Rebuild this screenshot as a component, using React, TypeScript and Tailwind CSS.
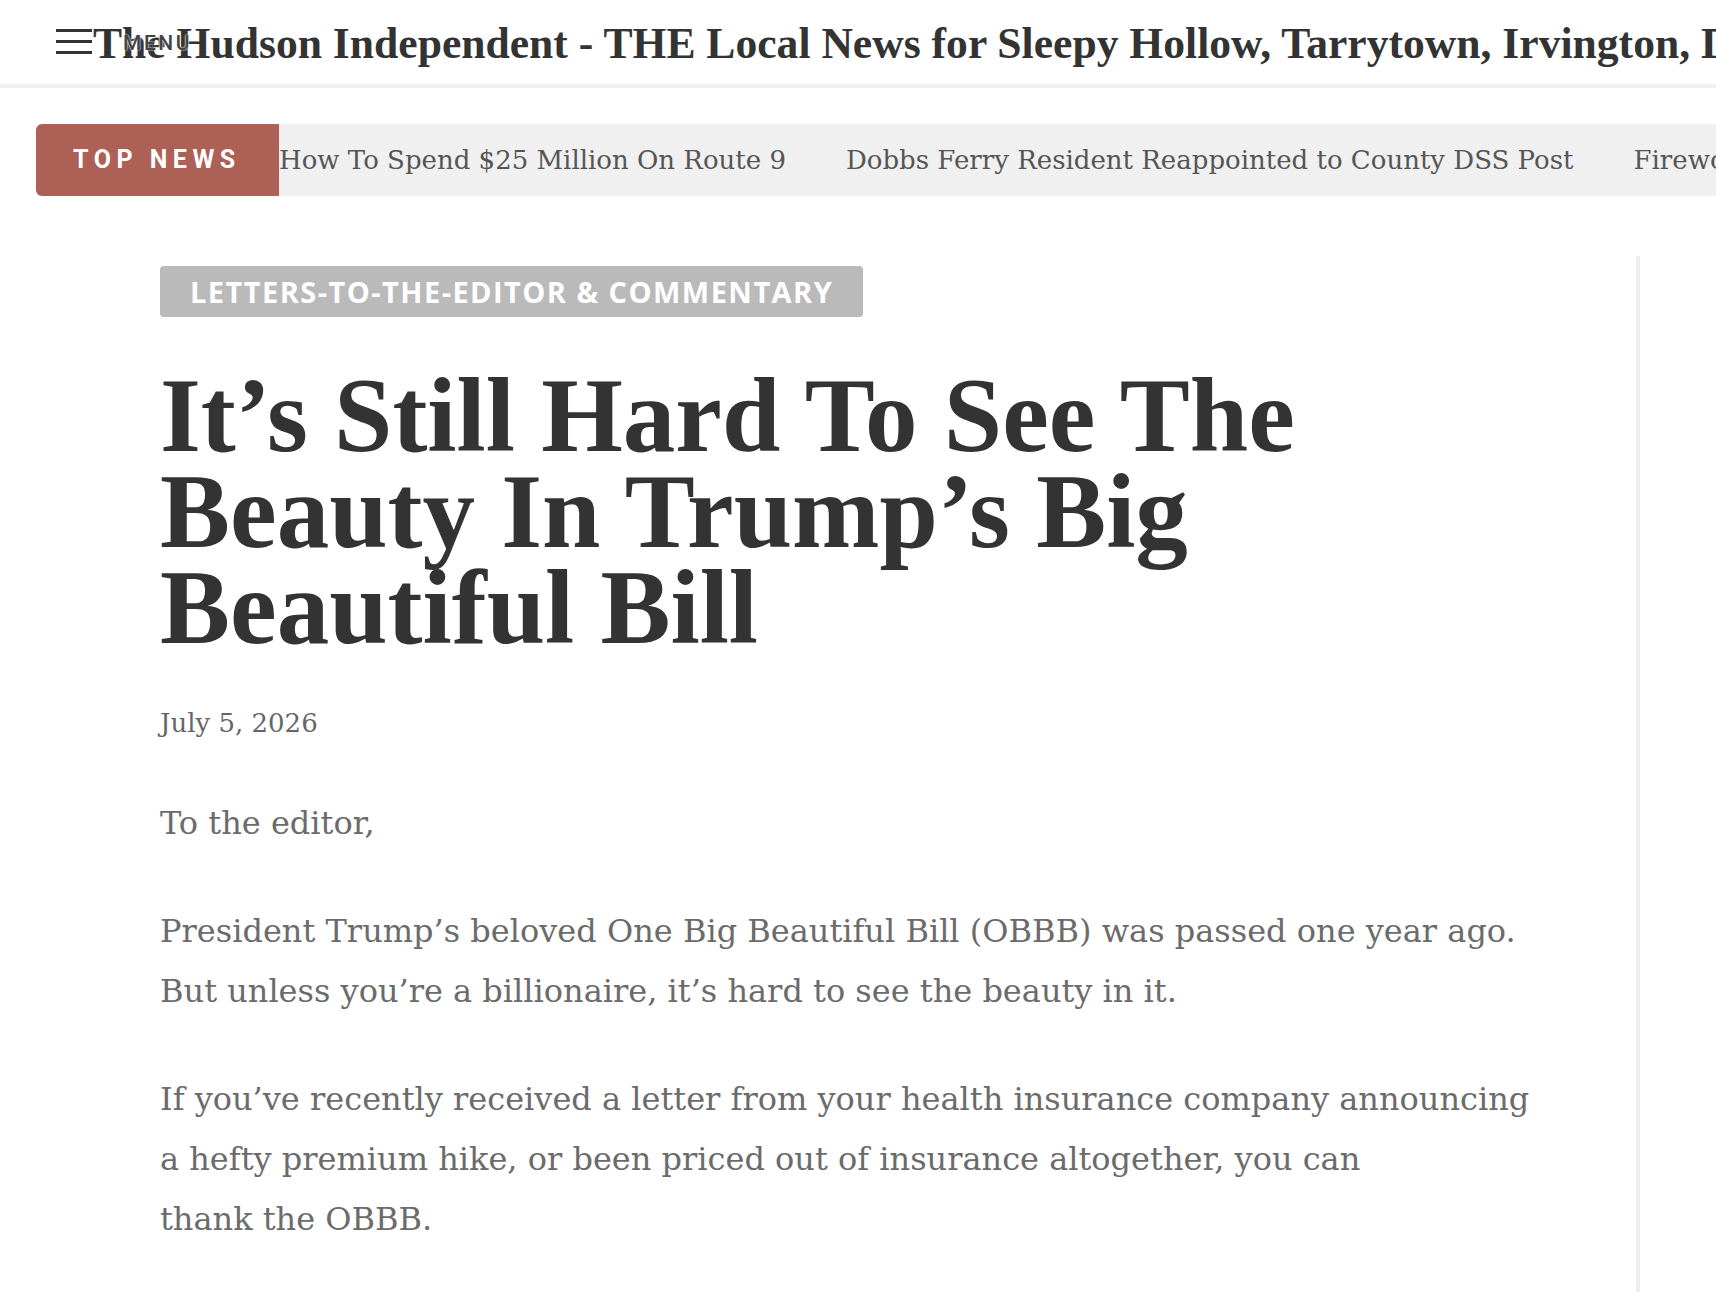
const tickerItems = [
  "How To Spend $25 Million On Route 9",
  "Dobbs Ferry Resident Reappointed to County DSS Post",
  "Fireworks Return To The Riverfront This Weekend",
];

export default function App() {
  return (
    <div className="min-h-screen bg-white overflow-hidden">
      {/* site header */}
      <header className="relative h-[88px] border-b-4 border-[#f0f0f0] flex items-center pl-[93px] pt-[4px] overflow-hidden whitespace-nowrap">
        <span className="font-['Liberation_Serif','Times_New_Roman',serif] font-bold text-[43.6px] text-[#333]">
          The Hudson Independent - THE Local News for Sleepy Hollow, Tarrytown, Irvington, Dobbs Ferry
        </span>
        {/* menu toggle sits on top of the site title */}
        <button className="absolute z-10 left-[56px] top-[29px] flex items-center text-[#333]">
          <span className="flex flex-col gap-[8px]">
            <span className="block w-[36px] h-[3px] bg-[#333]" />
            <span className="block w-[36px] h-[3px] bg-[#333]" />
            <span className="block w-[36px] h-[3px] bg-[#333]" />
          </span>
          <span className="ml-[31px] mt-[4px] font-['Roboto',sans-serif] font-medium text-[21px] leading-none tracking-[0.12em] text-[#444] [text-shadow:0_0_2px_#fff,0_0_1px_#fff]">
            MENU
          </span>
        </button>
      </header>

      {/* top news ticker */}
      <div className="mt-[36px] pl-[36px] flex h-[72px]">
        <div className="w-[243px] shrink-0 rounded-l-[6px] bg-[#ad6055] flex items-center pl-[37px]">
          <span className="font-['Roboto',sans-serif] font-bold text-[25px] tracking-[0.22em] text-white">
            TOP NEWS
          </span>
        </div>
        <div className="flex-1 bg-[#f0f0f0] flex items-center gap-[60px] overflow-hidden whitespace-nowrap">
          {tickerItems.map((item) => (
            <a
              key={item}
              className="font-['DejaVu_Serif',serif] text-[26px] text-[#555]"
            >
              {item}
            </a>
          ))}
        </div>
      </div>

      <main className="flex mt-[60px]">
        <article className="w-[1636px] shrink-0 pl-[160px] pr-[60px] pt-[10px] pb-[120px]">
          <span className="inline-block rounded-[4px] bg-[#bababa] px-[30px] h-[51px] leading-[51px] font-['Open_Sans',sans-serif] font-bold text-[29px] tracking-[0.05em] text-white">
            LETTERS-TO-THE-EDITOR &amp; COMMENTARY
          </span>

          <h1 className="mt-[51px] font-['Liberation_Serif','Times_New_Roman',serif] font-bold text-[105px] leading-[96px] text-[#333]">
            It’s Still Hard To See The
            <br />
            Beauty In Trump’s Big
            <br />
            Beautiful Bill
          </h1>

          <div className="mt-[47px] font-['DejaVu_Serif',serif] text-[26px] leading-[40px] text-[#666]">
            July 5, 2026
          </div>

          <div className="mt-[50px] font-['DejaVu_Serif',serif] text-[32px] leading-[60px] text-[#6b6b6b] space-y-[48px]">
            <p>To the editor,</p>
            <p>
              President Trump’s beloved One Big Beautiful Bill (OBBB) was passed one year ago.
              <br />
              But unless you’re a billionaire, it’s hard to see the beauty in it.
            </p>
            <p>
              If you’ve recently received a letter from your health insurance company announcing
              <br />
              a hefty premium hike, or been priced out of insurance altogether, you can
              <br />
              thank the OBBB.
            </p>
          </div>
        </article>
        <aside className="flex-1 border-l-4 border-[#eeeeee]" />
      </main>
    </div>
  );
}
